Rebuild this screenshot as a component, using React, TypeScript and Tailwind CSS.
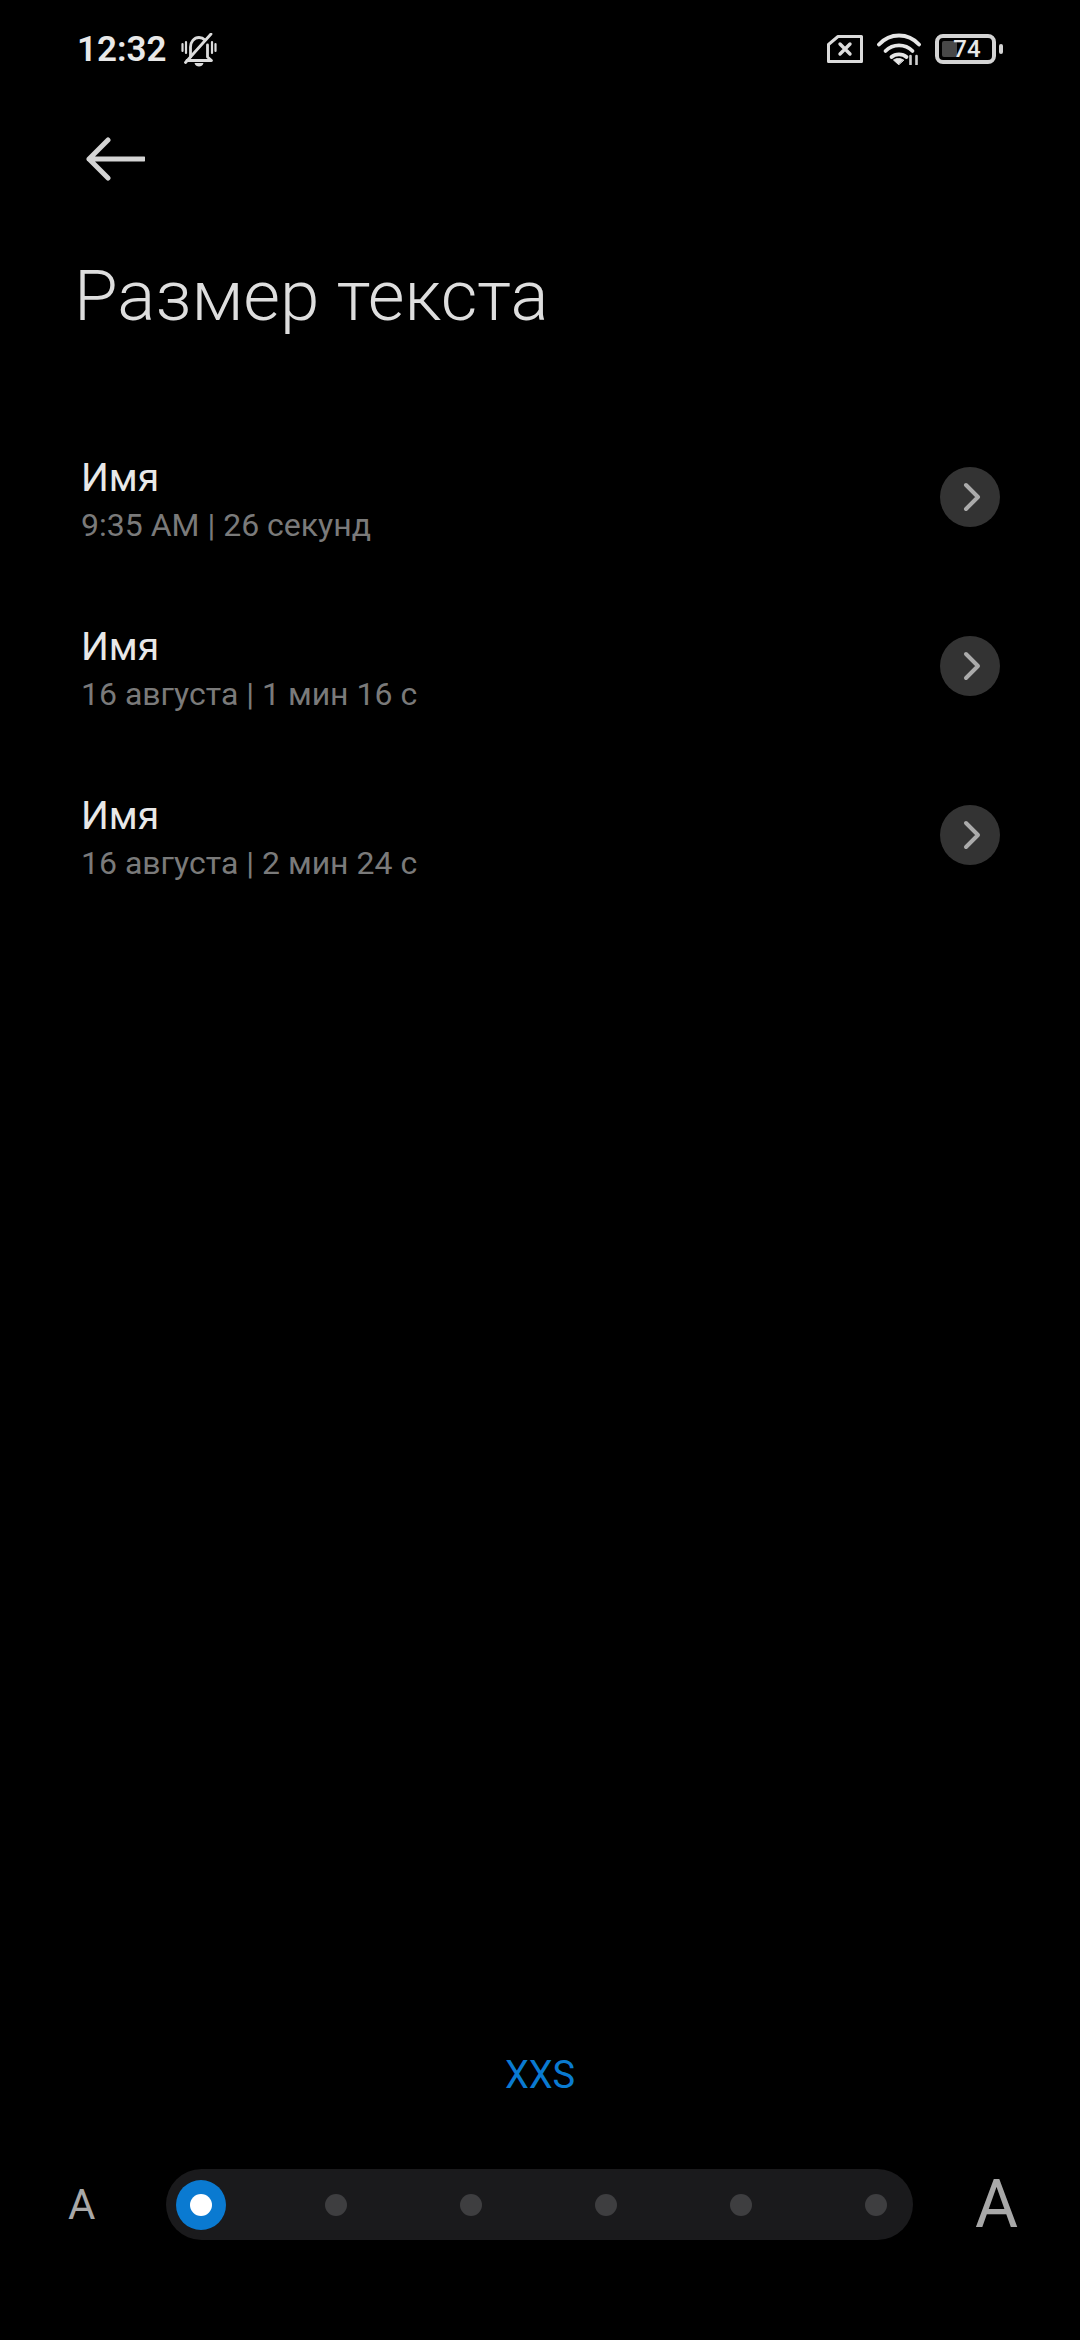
const calls = [
  { name: 'Имя', info: '9:35 AM | 26 секунд' },
  { name: 'Имя', info: '16 августа | 1 мин 16 с' },
  { name: 'Имя', info: '16 августа | 2 мин 24 с' },
];

function BellOff() {
  return (
    <svg width="36" height="34" viewBox="0 0 36 34" fill="none" stroke="#dcdcdc" strokeWidth="2.8" strokeLinecap="round">
      <path d="M9.500 24V14c0-5 3.500-9.500 8.500-9.500 2.500 0 4.500 1 6 2.500M26.500 12v12l4 3.500H6" strokeLinejoin="round" />
      <path d="M4.500 29.500 30 1" />
      <path d="M13.500 30h9c-.8 2.600-2.500 3.400-4.500 3.400s-3.700-.8-4.500-3.400z" fill="#dcdcdc" stroke="none" />
      <path d="M1.500 11v7M5 9v11M31 9v11M34.500 11v7" strokeWidth="2.200" />
    </svg>
  );
}

function SimOff() {
  return (
    <svg width="36" height="28" viewBox="0 0 36 28" fill="none" stroke="#dcdcdc" strokeWidth="3" strokeLinejoin="round" strokeLinecap="round">
      <path d="M11 1.500h23.500v25h-33V9.500z" />
      <path d="m13 9 10 10M23 9 13 19" strokeWidth="3.400" />
    </svg>
  );
}

function Wifi() {
  return (
    <svg width="44" height="32" viewBox="0 0 44 32" fill="none" stroke="#e6e6e6" strokeWidth="3.800" strokeLinecap="round">
      <path d="M2 11.500c11-12 29-12 40 0" />
      <path d="M8.500 18c7.500-7.500 19.500-7.500 27 0" />
      <path d="M14.500 24c4-3.500 11-3.500 15 0" />
      <path d="m21.500 31.500-5-4.500c3-2 7-2 10 0z" fill="#e6e6e6" stroke="#e6e6e6" strokeWidth="1" />
      <path d="M33.500 23v8.500M39.500 23v8.500" strokeWidth="2.600" stroke="#d0d0d0" />
    </svg>
  );
}

function Battery() {
  return (
    <div className="flex items-center gap-[3px]">
      <div className="relative flex h-[30px] w-[61px] items-center rounded-[8px] border-[4px] border-[#d4d4d4] p-[3px]">
        <div className="h-full w-[15px] rounded-[2px] bg-[#484848]" />
        <span className="absolute inset-0 flex items-center justify-center pl-[3px] text-[24px] font-medium leading-none text-[#e8e8e8]">74</span>
      </div>
      <div className="h-[10px] w-[4px] rounded-full bg-[#d4d4d4]" />
    </div>
  );
}

export default function App() {
  return (
    <div className="flex h-[2340px] w-[1080px] flex-col bg-black font-['Roboto',sans-serif]">
      <div className="flex h-[98px] items-start justify-between pl-[77px] pr-[77px] pt-[33px]">
        <div className="flex items-center gap-[14px]">
          <span className="text-[35px] font-semibold leading-[32px] text-[#e8e8e8]">12:32</span>
          <BellOff />
        </div>
        <div className="flex items-center gap-[14px]">
          <SimOff />
          <Wifi />
          <Battery />
        </div>
      </div>

      <div className="pl-[85px] pt-[39px]">
        <svg width="60" height="44" viewBox="0 0 60 44" fill="none" stroke="#d4d4d4" strokeWidth="5" strokeLinecap="round" strokeLinejoin="round">
          <path d="M23 3 4 22l19 19M4 22h55" />
        </svg>
      </div>

      <h1 className="pl-[74px] pt-[73px] text-[71px] font-light leading-[84px] text-[#dedede]">Размер текста</h1>

      <ul className="mt-[73px]">
        {calls.map((call, i) => (
          <li key={i} className="flex h-[169px] items-center justify-between pl-[81px] pr-[80px]">
            <div className="pt-[12px]">
              <div className="text-[39px] leading-[46px] text-[#e8e8e8]">{call.name}</div>
              <div className="text-[32px] leading-[48px] text-[#7a7a7a]">{call.info}</div>
            </div>
            <div className="mt-[2px] flex h-[60px] w-[60px] items-center justify-center rounded-full bg-[#333333] pl-[4px]">
              <svg width="20" height="32" viewBox="0 0 20 32" fill="none" stroke="#ababab" strokeWidth="4" strokeLinecap="round" strokeLinejoin="round">
                <path d="m4 4 12 12L4 28" />
              </svg>
            </div>
          </li>
        ))}
      </ul>

      <div className="mt-auto pb-[100px]">
        <div className="text-center text-[38px] leading-[46px] text-[#0a7ad1]">XXS</div>
        <div className="mt-[71px] flex items-center pl-[68px]">
          <span className="w-[98px] text-[42px] leading-none text-[#a8a8a8]">A</span>
          <div className="flex h-[71px] w-[747px] items-center justify-between rounded-full bg-[#1a1a1c] pl-[10px] pr-[12px]">
            <div className="flex h-[50px] w-[50px] items-center justify-center rounded-full bg-[#0a7ad1]">
              <div className="h-[22px] w-[22px] rounded-full bg-white" />
            </div>
            {[0, 1, 2, 3, 4].map((n) => (
              <div key={n} className="flex w-[50px] justify-center">
                <div className="h-[22px] w-[22px] rounded-full bg-[#3e3e40]" />
              </div>
            ))}
          </div>
          <span className="ml-[62px] text-[66px] leading-none text-[#a8a8a8]">A</span>
        </div>
      </div>
    </div>
  );
}
